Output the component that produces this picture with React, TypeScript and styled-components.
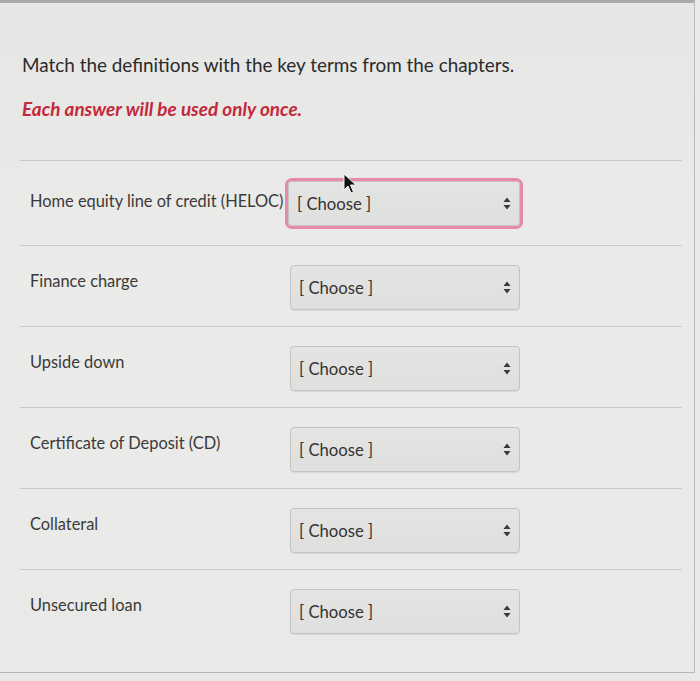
import styled, { createGlobalStyle } from "styled-components";

const GlobalStyle = createGlobalStyle`
  html, body {
    margin: 0;
    padding: 0;
    background: #e9e9e7;
  }
  body {
    font-family: Lato, "Open Sans", "Liberation Sans", sans-serif;
    color: #2f2f2f;
  }
`;

const Page = styled.div`
  position: relative;
  width: 694px;
  height: 669px;
  border-top: 3px solid #aaaaaa;
  border-right: 1px solid #bcbcbc;
  border-bottom: 1px solid #b8b8b8;
  background: linear-gradient(180deg, #e6e6e4 0%, #ebebe9 40%, #e9e9e7 100%);
`;

const Prompt = styled.div`
  padding: 50px 0 0 22px;
  height: 107px;
`;

const Heading = styled.p`
  margin: 0;
  font-size: 18.9px;
  line-height: 23px;
  color: #2b2b2b;
`;

const Note = styled.p`
  margin: 21px 0 0;
  font-size: 18.9px;
  line-height: 23px;
  font-weight: 700;
  font-style: italic;
  color: #c3293c;
`;

const QuestionList = styled.div`
  margin: 0 12px 0 20px;
`;

const Row = styled.div`
  display: grid;
  grid-template-columns: 260px 230px;
  padding: 19px 0 16px 10px;
  border-top: 1px solid #c9c9c7;
`;

const Term = styled.span<{ $lower?: boolean }>`
  align-self: start;
  padding-top: ${(p) => (p.$lower ? "11px" : "6px")};
  font-size: 16.4px;
  line-height: 19px;
  color: #3a3a3a;
  white-space: nowrap;
`;

const Select = styled.div<{ $focused?: boolean }>`
  display: flex;
  align-items: center;
  justify-content: space-between;
  box-sizing: border-box;
  height: 45px;
  margin: ${(p) => (p.$focused ? "1px 0 3px -2px" : "0")};
  padding: 0 8px 0 8px;
  border: 1px solid #c3c3c1;
  border-radius: 4px;
  background: linear-gradient(180deg, #e4e4e2 0%, #dfdfdd 100%);
  box-shadow: ${(p) =>
    p.$focused
      ? "0 0 0 3px #e58aa8, 0 1px 1px rgba(0,0,0,0.08)"
      : "0 1px 1px rgba(0,0,0,0.08)"};
`;

const Placeholder = styled.span`
  font-size: 16.7px;
  color: #333333;
`;

const Pointer = styled.svg`
  position: absolute;
  left: 343px;
  top: 170px;
`;

const Arrows = () => (
  <svg width="8" height="13" viewBox="0 0 8 13">
    <path d="M4 0.5 L7.5 5 H0.5 Z" fill="#3a3a3a" />
    <path d="M4 12.5 L7.5 8 H0.5 Z" fill="#3a3a3a" />
  </svg>
);

const terms = [
  "Home equity line of credit (HELOC)",
  "Finance charge",
  "Upside down",
  "Certificate of Deposit (CD)",
  "Collateral",
  "Unsecured loan",
];

export default function App() {
  return (
    <>
      <GlobalStyle />
      <Page>
        <Prompt>
          <Heading>Match the definitions with the key terms from the chapters.</Heading>
          <Note>Each answer will be used only once.</Note>
        </Prompt>
        <QuestionList>
          {terms.map((term, i) => (
            <Row key={term}>
              <Term $lower={i === 0}>{term}</Term>
              <Select $focused={i === 0}>
                <Placeholder>[ Choose ]</Placeholder>
                <Arrows />
              </Select>
            </Row>
          ))}
        </QuestionList>
        <Pointer width="14" height="22" viewBox="0 0 14 22">
          <path
            d="M1 1 L1 17 L5 13 L8 20 L10.5 19 L7.5 12 L13 12 Z"
            fill="#111"
            stroke="#f4f4f4"
            strokeWidth="1"
            strokeLinejoin="round"
          />
        </Pointer>
      </Page>
    </>
  );
}
